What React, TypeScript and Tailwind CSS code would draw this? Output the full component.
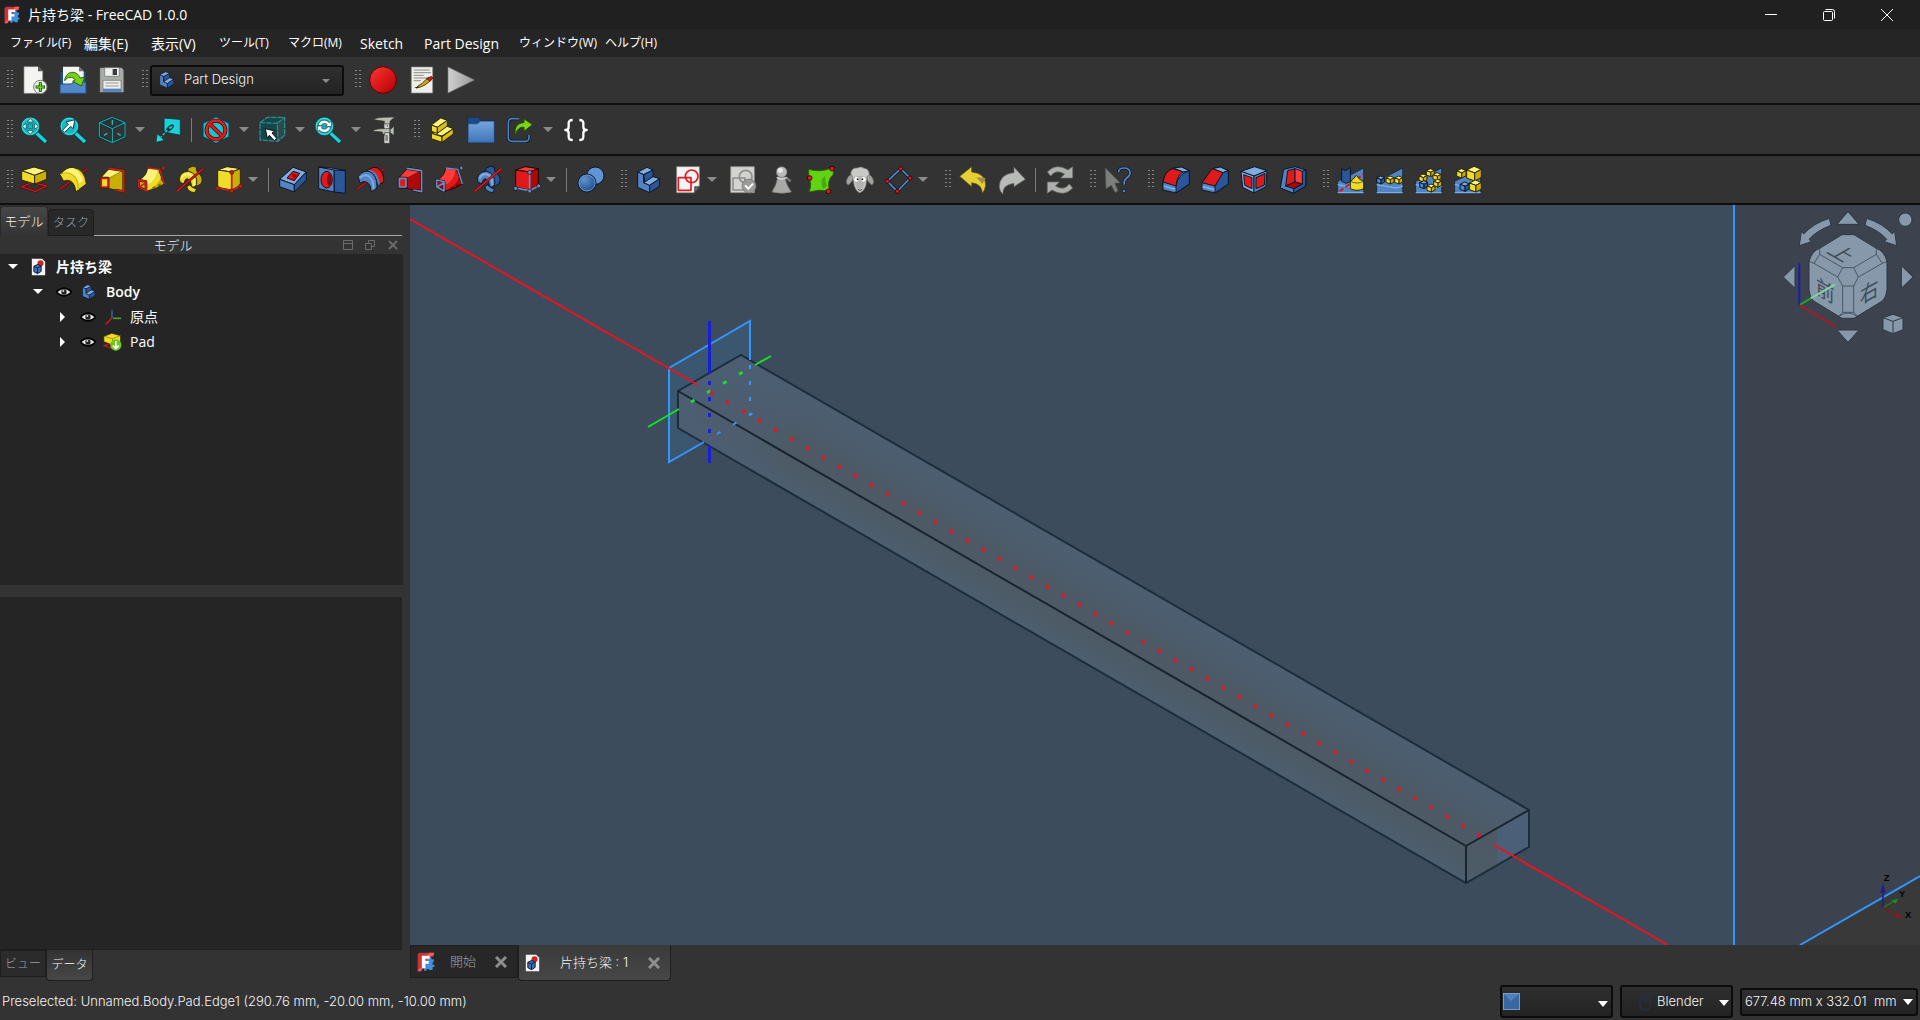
import React from 'react'

const UI_FONT = "font-['Open_Sans','Noto_Sans_CJK_JP',sans-serif]"
const GOTHIC_FONT = "font-['Inter','Noto_Sans_CJK_JP',sans-serif] font-light"

const MENUS = [
  { label: 'ファイル(F)', width: 'w-[74px] text-[12px]' },
  { label: '編集(E)', width: 'w-[67px] text-[14px]' },
  { label: '表示(V)', width: 'w-[68px] text-[14px]' },
  { label: 'ツール(T)', width: 'w-[69px] text-[12px]' },
  { label: 'マクロ(M)', width: 'w-[72px] text-[12px]' },
  { label: 'Sketch', width: 'w-[64px] text-[14px]' },
  { label: 'Part Design', width: 'w-[95px] text-[14px]' },
  { label: 'ウィンドウ(W)', width: 'w-[86px] text-[12px]' },
  { label: 'ヘルプ(H)', width: 'w-[72px] text-[12px]' },
]

interface Palette {
  light: string
  mid: string
  dark: string
  line: string
  accent: string
}

const ADD: Palette = { light: '#fdf27a', mid: '#f0dc28', dark: '#c9ae08', line: '#2c2600', accent: '#d11a1f' }
const SUB: Palette = { light: '#ff3b3b', mid: '#e01a1a', dark: '#b00808', line: '#200404', accent: '#5d92cc' }
const BLUE: Palette = { light: '#80acdf', mid: '#5284c4', dark: '#2b579a', line: '#0b1727', accent: '#d11a1f' }

function Svg({ children, className }: { children: React.ReactNode; className?: string }) {
  return (
    <svg viewBox="0 0 84 84" aria-hidden="true" className={className ?? 'size-7'} strokeLinejoin="round">
      {children}
    </svg>
  )
}

/* ---------- File / macro icons ---------- */

function NewIcon() {
  return (
    <Svg>
      <path d="M12 2h42l14 14v66H12z" fill="#f4f4f2" stroke="#8d8f8b" strokeWidth="2" />
      <path d="M54 2v14h14z" fill="#55595d" />
      <circle cx="61" cy="63" r="20" fill="#eef4ea" stroke="#777" strokeWidth="3" />
      <path d="M61 49v28M47 63h28" stroke="#173d03" strokeWidth="9" />
      <path d="M61 51v24M49 63h24" stroke="#6ddb1d" strokeWidth="4" />
    </Svg>
  )
}

function OpenIcon() {
  return (
    <Svg>
      <path d="M4 18h76v64H4z" fill="#204a87" />
      <path d="M12 2h48l14 14v42H12z" fill="#f4f4f2" />
      <path d="M60 2v14h14z" fill="#6b7075" />
      <path d="M3 54h34l6-6h38v34H3z" fill="#5288c7" stroke="#204a87" strokeWidth="3" />
      <path d="M17 44c4-32 38-32 46-8l14-2-10 26-26-14 8-4c-8-12-24-10-32 2z" fill="#73d216" stroke="#2c6402" strokeWidth="3" />
    </Svg>
  )
}

function SaveIcon() {
  return (
    <Svg>
      <path d="M5 4h66l7 8v68H5z" fill="#a9aca7" stroke="#3c3e3b" strokeWidth="3" />
      <path d="M20 5h44v26H20z" fill="#f0f0ee" stroke="#6a6c68" strokeWidth="2" />
      <path d="M44 9h13v18H44z" fill="#3a3d40" />
      <path d="M15 43h54v34H15z" fill="#eeeeec" stroke="#6a6c68" strokeWidth="2" />
      <path d="M15 68h54v9H15z" fill="#4f84c4" />
      <path d="M22 51h40M22 60h40" stroke="#9a9c98" strokeWidth="3" />
    </Svg>
  )
}

function RecordIcon() {
  return (
    <Svg>
      <circle cx="42" cy="42" r="40" fill="url(#recordFill)" stroke="#5c0404" strokeWidth="3" />
      <defs>
        <linearGradient id="recordFill" x1="0" y1="0" x2="1" y2="1">
          <stop offset="0" stopColor="#ff3434" />
          <stop offset="1" stopColor="#b40000" />
        </linearGradient>
      </defs>
    </Svg>
  )
}

function MacroIcon() {
  return (
    <Svg>
      <path d="M10 3h64v78H10z" fill="#eeeeea" stroke="#888a85" strokeWidth="2" />
      <path d="M17 12h48M17 20h52M17 28h30M17 36h42M17 44h22" stroke="#8c8e8a" strokeWidth="3" />
      <path d="M24 66c10-12 16-10 20-16l18-16 8 8-18 14c-8 4-14 8-28 10z" fill="#d4a514" stroke="#4c3800" strokeWidth="3" />
      <path d="M56 38l14-7 5 5-9 10z" fill="#cc1c1c" stroke="#500" strokeWidth="2" />
      <path d="M18 66h10l4-6z" fill="#222" />
    </Svg>
  )
}

function PlayIcon() {
  return (
    <Svg>
      <path d="M3 3L82 42L3 81z" fill="url(#playFill)" stroke="#777" strokeWidth="2" />
      <defs>
        <linearGradient id="playFill" x1="0" y1="0" x2="1" y2="0">
          <stop offset="0" stopColor="#d0d0d0" />
          <stop offset="1" stopColor="#9a9a9a" />
        </linearGradient>
      </defs>
    </Svg>
  )
}

/* ---------- View icons ---------- */

function Lens({ children }: { children: React.ReactNode }) {
  return (
    <Svg>
      <path d="M50 52L80 80" stroke="#063c41" strokeWidth="15" />
      <path d="M50 52L78 78" stroke="#1fd0d8" strokeWidth="10" />
      <circle cx="31" cy="31" r="28" fill="#17b8c0" stroke="#063c41" strokeWidth="2" />
      <circle cx="31" cy="31" r="24" fill="none" stroke="#45e2e8" strokeWidth="3" />
      {children}
    </Svg>
  )
}

function FitAllIcon() {
  return (
    <Lens>
      <g fill="#fff" stroke="#063c41" strokeWidth="2">
        <path d="M31 7l9 11H22zM31 55l9-11H22zM7 31l11-9v18zM55 31l-11-9v18z" />
      </g>
      <path d="M24 24h14v14H24z" fill="none" stroke="#0a5a60" strokeWidth="2" />
    </Lens>
  )
}

function FitSelectionIcon() {
  return (
    <Lens>
      <path d="M10 43l18-18-7-7 27-7-6 27-7-7-18 18z" fill="#fff" stroke="#063c41" strokeWidth="3" />
    </Lens>
  )
}

function SyncViewIcon() {
  return (
    <Lens>
      <path d="M12 28c4-18 24-20 34-8l6-5v17H34l6-6c-6-6-16-4-20 4z" fill="#fff" stroke="#063c41" strokeWidth="2" />
      <path d="M50 34c-4 18-24 20-34 8l-6 5V30h18l-6 6c6 6 16 4 20-4z" fill="#fff" stroke="#063c41" strokeWidth="2" />
    </Lens>
  )
}

function IsoIcon() {
  return (
    <Svg>
      <path d="M43 4L81 20V62L43 80L4 62V20zM4 20L43 38L81 20M43 38V80" fill="none" stroke="#062f33" strokeWidth="7" />
      <path d="M43 4L81 20V62L43 80L4 62V20zM4 20L43 38L81 20M43 38V80" fill="none" stroke="#1fb9c1" strokeWidth="3" />
      <path d="M43 12v14M18 58l10-6M68 58l-10-6" stroke="#1fb9c1" strokeWidth="4" />
    </Svg>
  )
}

function AlignIcon() {
  return (
    <Svg>
      <path d="M30 6L79 10V58L30 48z" fill="#1cd0d8" stroke="#063c41" strokeWidth="3" />
      <ellipse cx="48" cy="36" rx="12" ry="5" transform="rotate(-40 48 36)" fill="none" stroke="#04393d" strokeWidth="4" />
      <path d="M46 37L20 64" stroke="#04393d" strokeWidth="7" />
      <path d="M40 43L18 66" stroke="#2ad8e0" strokeWidth="4" strokeDasharray="8 4" />
      <path d="M6 79l4-26 20 20z" fill="#2ad8e0" stroke="#04393d" strokeWidth="2" />
    </Svg>
  )
}

function DrawStyleIcon() {
  return (
    <Svg>
      <path d="M42 2L81 22V62L42 82L3 62V22z" fill="#19c4cc" stroke="#063c41" strokeWidth="3" />
      <circle cx="42" cy="42" r="28" fill="none" stroke="#3f0303" strokeWidth="12" />
      <path d="M22 22l40 40" stroke="#3f0303" strokeWidth="12" />
      <circle cx="42" cy="42" r="28" fill="none" stroke="#e01b1b" strokeWidth="8" />
      <path d="M22 22l40 40" stroke="#e01b1b" strokeWidth="8" />
    </Svg>
  )
}

function BoxSelectIcon() {
  return (
    <Svg>
      <path d="M6 20L28 4H80V58L60 76L6 72z" fill="#154649" />
      <path d="M58 22L80 4V58L60 76z" fill="#2c4a4c" />
      <path d="M6 20L28 4H80V58L60 76L6 72zM6 20L58 22L60 76M58 22L80 4" fill="none" stroke="#2b8c91" strokeWidth="4" strokeDasharray="16 3" />
      <path d="M22 38l28 7-8 6 14 16-7 7-15-16-6 9z" fill="#fff" stroke="#111" strokeWidth="3" />
    </Svg>
  )
}

function CaliperIcon() {
  return (
    <Svg>
      <path d="M42 4h17v78H42z" fill="#d5d8d0" stroke="#33352f" strokeWidth="2" />
      <path d="M10 10C22 4 36 4 74 3L60 16v8H44v-8c-12-2-22-2-34-6zM8 44c12-6 20-6 34-6h22l8-8v28L60 50H44v8c-4-4-6-6-8-10-10-2-20 0-28-4z" fill="#b9bdb4" stroke="#33352f" strokeWidth="2" />
      <path d="M52 28v4M46 60h8M46 66h8M46 72h8M60 34v18" stroke="#33352f" strokeWidth="3" />
    </Svg>
  )
}

function PartIcon() {
  return (
    <Svg>
      <g stroke="#2c2600" strokeWidth="3">
        <path d="M10 52L50 28L76 38L42 60z" fill="#fdf27a" />
        <path d="M10 52L42 62V79L10 68z" fill="#f0dc28" />
        <path d="M42 62L76 38V54L42 79z" fill="#d8be10" />
        <path d="M10 27L38 6L58 13L28 34z" fill="#fdf27a" />
        <path d="M10 27L28 34V52L10 46z" fill="#f0dc28" />
        <path d="M28 34L58 13V30L28 52z" fill="#d8be10" />
      </g>
    </Svg>
  )
}

function GroupIcon() {
  return (
    <Svg>
      <path d="M2 80V8q0-4 4-4h26q4 0 6 6l2 4h42v66z" fill="#204a87" stroke="#10294c" strokeWidth="2" />
      <path d="M4 24h28l8-8h41v63H4z" fill="url(#folderFill)" stroke="#3465a4" strokeWidth="2" />
      <defs>
        <linearGradient id="folderFill" x1="0" y1="0" x2="0" y2="1">
          <stop offset="0" stopColor="#77a5da" />
          <stop offset="1" stopColor="#3f75b8" />
        </linearGradient>
      </defs>
    </Svg>
  )
}

function LinkIcon() {
  return (
    <Svg>
      <path d="M40 8H18Q7 8 7 20V64Q7 76 18 76H58Q69 76 69 64V56" fill="none" stroke="#0b1727" strokeWidth="9" />
      <path d="M40 8H18Q7 8 7 20V64Q7 76 18 76H58Q69 76 69 64V56" fill="none" stroke="#4a7fc0" strokeWidth="5" />
      <path d="M28 58C24 32 36 20 54 20V8L79 26L54 46V34C40 32 32 42 28 58z" fill="#7bd31c" stroke="#234d02" strokeWidth="3" />
    </Svg>
  )
}

function VariableIcon() {
  return (
    <Svg>
      <path d="M32 12Q20 12 20 22V32Q20 42 10 42Q20 42 20 52V62Q20 72 32 72M52 12Q64 12 64 22V32Q64 42 74 42Q64 42 64 52V62Q64 72 52 72" fill="none" stroke="#fff" strokeWidth="7" />
    </Svg>
  )
}

/* ---------- Feature icons, shared by the additive and subtractive sets ---------- */

function PadIcon() {
  return (
    <Svg>
      <path d="M4 62L38 50L80 60L46 76z" fill="none" stroke="#4a0405" strokeWidth="7" />
      <path d="M4 62L38 50L80 60L46 76z" fill="none" stroke="#d11a1f" strokeWidth="4" />
      <g stroke={ADD.line} strokeWidth="3">
        <path d="M5 14L42 3L80 14L44 28z" fill={ADD.light} />
        <path d="M5 14L44 28V54L5 42z" fill={ADD.mid} />
        <path d="M44 28L80 14V40L44 54z" fill={ADD.dark} />
      </g>
    </Svg>
  )
}

function PocketIcon() {
  return (
    <Svg>
      <g stroke={BLUE.line} strokeWidth="3">
        <path d="M2 40L42 4L82 18L46 56z" fill={BLUE.light} />
        <path d="M2 40L46 56V78L2 62z" fill={BLUE.mid} />
        <path d="M46 56L82 18V42L46 78z" fill={BLUE.dark} />
      </g>
      <path d="M24 36L42 16L62 22L46 44z" fill="#e01a1a" stroke="#200404" strokeWidth="3" />
      <path d="M38 22l16 6-10 12z" fill="#8e0606" />
    </Svg>
  )
}

function RevolutionIcon() {
  return (
    <Svg>
      <path d="M2 70L84 8" stroke="#4a0405" strokeWidth="7" />
      <path d="M2 70L84 8" stroke="#d11a1f" strokeWidth="4" />
      <path d="M3 26Q22 2 42 4Q78 10 82 54L50 78Q48 52 34 45Q22 40 14 46z" fill={ADD.mid} stroke={ADD.line} strokeWidth="3" />
      <path d="M6 26Q24 6 40 7Q66 14 72 44L60 52Q54 24 28 22Q14 22 6 26z" fill={ADD.light} />
      <path d="M3 26Q22 16 36 24Q58 34 58 72" fill="none" stroke={ADD.dark} strokeWidth="3" />
    </Svg>
  )
}

function HoleIcon() {
  return (
    <Svg>
      <g stroke={BLUE.line} strokeWidth="3">
        <path d="M48 10L82 14V82L48 78z" fill={BLUE.dark} />
        <path d="M2 3L48 10V78L2 68z" fill={BLUE.mid} />
        <path d="M2 3L40 6L82 13L48 12z" fill={BLUE.light} />
      </g>
      <ellipse cx="26" cy="41" rx="17" ry="25" fill="#e01a1a" stroke="#0b1727" strokeWidth="3" />
      <path d="M33 20q-12 20 0 42q8-6 8-21t-8-21z" fill="#8e0606" />
    </Svg>
  )
}

function GrooveIcon() {
  return (
    <Svg>
      <path d="M2 68L82 8" stroke="#4a0405" strokeWidth="7" />
      <path d="M2 68L82 8" stroke="#d11a1f" strokeWidth="4" />
      <path d="M30 14Q48 0 62 6Q82 20 80 48L66 56L40 40z" fill={SUB.mid} stroke={SUB.line} strokeWidth="3" />
      <path d="M34 14Q60 16 66 56" fill="none" stroke={BLUE.mid} strokeWidth="6" />
      <path d="M3 32Q18 12 36 16Q62 26 60 66L42 78Q42 54 28 48Q16 44 10 52z" fill={BLUE.mid} stroke={BLUE.line} strokeWidth="3" />
      <path d="M8 36Q22 24 34 30Q50 40 50 70" fill="none" stroke={BLUE.light} strokeWidth="6" />
    </Svg>
  )
}

function LoftIcon({ c }: { c: Palette }) {
  return (
    <Svg>
      <path d="M10 34L34 8L76 14V76L30 66L10 62z" fill={c.mid} stroke={c.line} strokeWidth="3" />
      <path d="M10 34L34 8L76 14L34 36z" fill={c.light} stroke={c.line} strokeWidth="2" />
      <path d="M34 36L76 14V76L34 66z" fill={c.dark} />
      <path d="M32 7L77 14V77L52 72" fill="none" stroke={c.line} strokeWidth="8" />
      <path d="M32 7L77 14V77L52 72" fill="none" stroke={c.accent} strokeWidth="5" />
      <path d="M10 37H30V63H10z" fill={c.mid} stroke={c.line} strokeWidth="9" />
      <path d="M10 37H30V63H10z" fill={c.mid} stroke={c.accent} strokeWidth="5" />
    </Svg>
  )
}

function PipeIcon({ c }: { c: Palette }) {
  return (
    <Svg>
      <path d="M8 42Q30 30 32 6L66 10Q70 38 82 54Q58 70 28 76L6 62z" fill={c.dark} stroke={c.line} strokeWidth="3" />
      <path d="M8 42Q30 30 33 8L62 11Q60 44 30 58z" fill={c.light} />
      <path d="M62 11Q60 44 30 58V74Q64 60 72 34z" fill={c.mid} />
      <path d="M46 66Q64 60 78 50" fill="none" stroke={c.line} strokeWidth="5" strokeDasharray="9 9" strokeOpacity="0.5" />
      <path d="M32 6L68 10L82 54" fill="none" stroke={c.accent} strokeWidth="4" />
      <path d="M5 42L27 47V75L5 62z" fill="none" stroke={c.line} strokeWidth="8" />
      <path d="M5 42L27 47V75L5 62zM27 50L8 62" fill="none" stroke={c.accent} strokeWidth="5" />
      <ellipse cx="79" cy="6" rx="5" ry="6" fill={c.accent} stroke={c.line} strokeWidth="2" />
    </Svg>
  )
}

function HelixIcon({ c, rod }: { c: Palette; rod: string }) {
  return (
    <Svg>
      <path d="M36 6Q52 -4 62 4Q58 12 66 20Q84 34 76 52Q66 64 54 58Q62 46 50 34Q32 24 36 6z" fill={c.dark} stroke={c.line} strokeWidth="3" />
      <path d="M10 40Q12 16 38 16Q66 22 62 56Q54 68 46 62Q46 40 32 38Q27 40 24 52Q12 54 10 40z" fill={c.mid} stroke={c.line} strokeWidth="3" />
      <path d="M17 38Q21 24 38 24Q56 32 55 58" fill="none" stroke={c.light} strokeWidth="6" />
      <path d="M32 62Q36 78 56 80L62 68Q46 66 42 56z" fill={c.mid} stroke={c.line} strokeWidth="3" />
      <path d="M2 76L82 8" stroke="#3f0303" strokeWidth="7" />
      <path d="M2 76L82 8" stroke={rod} strokeWidth="5" />
    </Svg>
  )
}

function PrimitiveIcon({ c }: { c: Palette }) {
  return (
    <Svg>
      <g stroke={c.line} strokeWidth="3">
        <path d="M8 12L36 2L76 8L50 18z" fill={c.light} />
        <path d="M8 12L50 18V72L8 64z" fill={c.mid} />
        <path d="M50 18L76 8V58L50 72z" fill={c.dark} />
      </g>
      <path d="M8 66L50 74L76 60M50 18V74" fill="none" stroke={c.accent} strokeWidth="5" />
      <g fill={c.accent} stroke={c.line} strokeWidth="2">
        <circle cx="8" cy="67" r="6" />
        <circle cx="50" cy="75" r="6" />
        <circle cx="77" cy="60" r="6" />
        <circle cx="50" cy="19" r="6" />
      </g>
    </Svg>
  )
}

function BooleanIcon() {
  return (
    <Svg>
      <circle cx="55" cy="29" r="26" fill="#5f95d2" stroke="#0b1727" strokeWidth="3" />
      <circle cx="30" cy="51" r="27" fill="url(#ballFill)" stroke="#0b1727" strokeWidth="3" />
      <circle cx="30" cy="51" r="24" fill="none" stroke="#5f95d2" strokeWidth="3" />
      <defs>
        <radialGradient id="ballFill" cx="0.35" cy="0.3" r="0.8">
          <stop offset="0" stopColor="#5f95d2" />
          <stop offset="1" stopColor="#1a4684" />
        </radialGradient>
      </defs>
    </Svg>
  )
}

/* ---------- Body / sketch icons ---------- */

function BodyIcon({ className }: { className?: string }) {
  return (
    <Svg className={className}>
      <g stroke={BLUE.line} strokeWidth="3">
        <path d="M8 18L36 4L54 12L26 26z" fill={BLUE.light} />
        <path d="M8 18L26 26V50L44 58V80L8 64z" fill={BLUE.mid} />
        <path d="M26 26L54 12V32L30 50z" fill={BLUE.dark} />
        <path d="M26 50L54 32L74 38L44 58z" fill={BLUE.light} />
        <path d="M44 58L74 38V60L44 80z" fill={BLUE.dark} />
      </g>
    </Svg>
  )
}

function SketchIcon() {
  return (
    <Svg>
      <path d="M8 2H76V62L62 80H8z" fill="#f4f4f2" stroke="#8d8f8b" strokeWidth="2" />
      <path d="M76 62H62V80z" fill="#6a6e66" stroke="#222" strokeWidth="2" />
      <path d="M13 35H51V73H13z" fill="none" stroke="#e01b24" strokeWidth="5" />
      <circle cx="53" cy="31" r="19" fill="none" stroke="#e01b24" strokeWidth="5" />
    </Svg>
  )
}

function ValidateIcon() {
  return (
    <Svg>
      <path d="M5 2H76V80H5z" fill="#d3d3d1" stroke="#8d8f8b" strokeWidth="2" />
      <path d="M12 36H48V72H12z" fill="none" stroke="#8f8f8d" strokeWidth="5" />
      <circle cx="50" cy="32" r="19" fill="none" stroke="#8f8f8d" strokeWidth="5" />
      <circle cx="60" cy="60" r="21" fill="#9b9b99" stroke="#6a6a68" strokeWidth="2" />
      <path d="M48 58l10 10 14-15" fill="none" stroke="#fff" strokeWidth="6" />
    </Svg>
  )
}

function PawnIcon() {
  return (
    <Svg>
      <path d="M54 34l14 12" stroke="#777" strokeWidth="7" />
      <path d="M12 78Q26 56 30 32H50Q54 56 70 78Q42 86 12 78z" fill="#a8a8a6" stroke="#777" strokeWidth="2" />
      <circle cx="41" cy="18" r="16" fill="#bababa" stroke="#777" strokeWidth="2" />
      <circle cx="37" cy="13" r="8" fill="#e6e6e6" />
      <path d="M26 34Q42 44 56 34" fill="none" stroke="#d8d8d8" strokeWidth="4" />
    </Svg>
  )
}

function BlobIcon() {
  return (
    <Svg>
      <path d="M5 10Q40 20 74 6Q84 14 78 26Q58 44 68 76Q40 68 6 78Q16 56 5 34z" fill="#62d312" stroke="#2a6102" strokeWidth="3" />
      <path d="M54 30Q36 44 48 68Q58 66 60 58Q54 44 54 30z" fill="#3d9a08" fillOpacity="0.7" />
      <g fill="#e01b1b" stroke="#3f0303" strokeWidth="3">
        <circle cx="75" cy="8" r="7" />
        <circle cx="8" cy="36" r="7" />
        <circle cx="64" cy="76" r="7" />
      </g>
    </Svg>
  )
}

function SheepIcon() {
  return (
    <Svg>
      <path d="M18 24Q4 30 1 46Q2 58 8 56Q18 48 22 38zM66 24Q80 30 83 46Q82 58 76 56Q66 48 62 38z" fill="#a3a3a1" stroke="#6f6f6d" strokeWidth="2" />
      <path d="M14 22Q18 4 34 6Q46 0 54 7Q68 8 70 24Q62 30 62 42Q60 74 42 80Q26 76 22 44Q22 30 14 22z" fill="#c9c9c7" stroke="#7d7d7b" strokeWidth="2" />
      <path d="M24 34Q42 24 60 34L50 70Q42 76 34 70z" fill="#b4b4b2" />
      <circle cx="32" cy="40" r="7" fill="#fff" />
      <circle cx="52" cy="40" r="7" fill="#fff" />
      <circle cx="35" cy="40" r="3" fill="#222" />
      <circle cx="49" cy="40" r="3" fill="#222" />
      <path d="M36 70l6 4 6-4" fill="none" stroke="#555" strokeWidth="3" />
    </Svg>
  )
}

function DatumIcon() {
  return (
    <Svg>
      <path d="M7 46L47 8L75 36L37 76z" fill="none" stroke="#0b1727" strokeWidth="9" />
      <path d="M7 46L47 8L75 36L37 76z" fill="none" stroke="#5488c6" strokeWidth="5" />
      <g fill="#e01b1b" stroke="#3f0303" strokeWidth="3">
        <circle cx="47" cy="8" r="6" />
        <circle cx="7" cy="46" r="6" />
        <circle cx="75" cy="36" r="6" />
        <circle cx="37" cy="76" r="6" />
      </g>
    </Svg>
  )
}

/* ---------- Edit icons ---------- */

function UndoIcon() {
  return (
    <Svg>
      <path d="M2 31L38 2V18Q80 22 80 58Q78 72 70 82Q70 54 38 50V62z" fill="#e8cf38" stroke="#5a4d04" strokeWidth="2" />
      <path d="M52 34L80 36L70 54z" fill="#9d8f4a" />
    </Svg>
  )
}

function RedoIcon() {
  return (
    <Svg>
      <path d="M82 40L48 4V20Q4 24 4 64Q6 78 14 84Q14 56 48 52V62z" fill="#b9bbb8" stroke="#6a6c69" strokeWidth="2" />
    </Svg>
  )
}

function RefreshIcon() {
  return (
    <Svg>
      <g fill="#adafac" stroke="#6d6f6c" strokeWidth="2">
        <path d="M4 18Q30 -10 66 12L80 2V36H44L56 24Q30 8 14 30z" />
        <path d="M80 66Q54 94 18 72L4 82V48H40L28 60Q54 76 70 54z" />
      </g>
    </Svg>
  )
}

function WhatsThisIcon() {
  return (
    <Svg>
      <path d="M4 6L48 50L32 52L42 74L34 80L22 58L6 68z" fill="#7d7f7c" stroke="#55574f" strokeWidth="2" />
      <path d="M44 18Q44 6 60 6Q78 6 78 20Q78 30 68 36Q60 42 60 56" fill="none" stroke="#0b1727" strokeWidth="9" />
      <path d="M44 18Q44 6 60 6Q78 6 78 20Q78 30 68 36Q60 42 60 56" fill="none" stroke="#5086c6" strokeWidth="5" />
      <circle cx="60" cy="75" r="5" fill="#5086c6" stroke="#0b1727" strokeWidth="2" />
    </Svg>
  )
}

/* ---------- Dress-up icons ---------- */

function FilletIcon() {
  return (
    <Svg>
      <g stroke={BLUE.line} strokeWidth="3">
        <path d="M3 44Q10 14 34 6L58 3L82 14V54L42 81L3 72z" fill={BLUE.mid} />
        <path d="M34 6L58 3L82 14L64 18z" fill={BLUE.light} />
        <path d="M42 60Q46 26 82 14V54L42 81z" fill={BLUE.dark} />
        <path d="M3 48Q8 16 32 8L64 18Q46 24 42 60z" fill={SUB.mid} />
        <path d="M5 60L40 70" stroke={BLUE.light} strokeWidth="5" />
      </g>
    </Svg>
  )
}

function ChamferIcon() {
  return (
    <Svg>
      <g stroke={BLUE.line} strokeWidth="3">
        <path d="M3 50L34 8L58 3L82 14V54L42 81L3 72z" fill={BLUE.mid} />
        <path d="M34 8L58 3L82 14L66 20z" fill={BLUE.light} />
        <path d="M42 60L66 20L82 14V54L42 81z" fill={BLUE.dark} />
        <path d="M3 50L34 8L66 20L42 60z" fill={SUB.mid} />
        <path d="M5 62L40 71" stroke={BLUE.light} strokeWidth="5" />
      </g>
    </Svg>
  )
}

function DraftIcon() {
  return (
    <Svg>
      <g stroke={BLUE.line} strokeWidth="3">
        <path d="M3 16L44 2L81 14L42 30z" fill={BLUE.light} />
        <path d="M3 16L42 30V81L8 64z" fill={BLUE.light} />
        <path d="M42 30L81 14L78 62L42 81z" fill={BLUE.mid} />
        <path d="M11 26L36 35V68L14 58z" fill={SUB.mid} />
        <path d="M48 35L75 23L73 57L48 68z" fill={SUB.mid} />
      </g>
    </Svg>
  )
}

function ThicknessIcon() {
  return (
    <Svg>
      <g stroke={BLUE.line} strokeWidth="3">
        <path d="M14 10L48 2L81 12L80 60L44 82L4 66z" fill={BLUE.mid} />
        <path d="M81 12L80 60L44 82V68L70 54L70 16z" fill={BLUE.dark} />
        <path d="M26 14L48 8V48L20 60z" fill={SUB.mid} />
        <path d="M48 8L70 16V54L48 48z" fill={SUB.light} />
        <path d="M20 60L48 48L70 54L44 68z" fill={SUB.dark} />
      </g>
    </Svg>
  )
}

/* ---------- Pattern icons ---------- */

function Cube({ x, y, s, c }: { x: number; y: number; s: number; c: Palette }) {
  const p = (pts: number[][]) => pts.map(([a, b]) => `${x + a * s},${y + b * s}`).join(' ')
  return (
    <g stroke={c.line} strokeWidth="3">
      <polygon points={p([[0, 0.25], [0.5, 0], [1, 0.2], [0.55, 0.45]])} fill={c.light} />
      <polygon points={p([[0, 0.25], [0.55, 0.45], [0.55, 1], [0, 0.8]])} fill={c.mid} />
      <polygon points={p([[0.55, 0.45], [1, 0.2], [1, 0.75], [0.55, 1]])} fill={c.dark} />
    </g>
  )
}

function PatternBase() {
  return (
    <>
      <path d="M2 46L50 22L80 6V82H2z" fill={BLUE.mid} stroke={BLUE.line} strokeWidth="2" />
      <path d="M2 56L60 66L80 60M2 80H80" fill="none" stroke={BLUE.light} strokeWidth="4" />
    </>
  )
}

function MirrorIcon() {
  return (
    <Svg>
      <PatternBase />
      <path d="M8 76L78 26" stroke="#d11a1f" strokeWidth="6" strokeDasharray="14 7" />
      <path d="M14 8L26 14L40 4V46L28 52L14 46z" fill={BLUE.dark} stroke={BLUE.line} strokeWidth="3" />
      <path d="M40 46L48 40L58 28L68 40L80 46V68Q60 78 40 68z" fill={ADD.mid} stroke={ADD.line} strokeWidth="3" />
      <path d="M40 46Q60 56 80 46" fill="none" stroke={ADD.line} strokeWidth="2" />
    </Svg>
  )
}

function LinearIcon() {
  return (
    <Svg>
      <PatternBase />
      <Cube x={2} y={30} s={24} c={BLUE} />
      <Cube x={30} y={30} s={24} c={ADD} />
      <Cube x={56} y={30} s={24} c={ADD} />
    </Svg>
  )
}

function PolarIcon() {
  return (
    <Svg>
      <PatternBase />
      <Cube x={34} y={8} s={24} c={ADD} />
      <Cube x={12} y={24} s={24} c={ADD} />
      <Cube x={54} y={20} s={24} c={ADD} />
      <Cube x={14} y={44} s={24} c={BLUE} />
      <Cube x={56} y={40} s={24} c={ADD} />
      <Cube x={36} y={54} s={24} c={ADD} />
    </Svg>
  )
}

function MultiIcon() {
  return (
    <Svg>
      <PatternBase />
      <Cube x={8} y={8} s={28} c={ADD} />
      <Cube x={38} y={1} s={44} c={ADD} />
      <Cube x={18} y={48} s={28} c={BLUE} />
      <Cube x={46} y={42} s={36} c={ADD} />
    </Svg>
  )
}

/* ---------- Logo and tree icons ---------- */

function Logo({ className }: { className: string }) {
  return (
    <svg viewBox="0 0 60 66" aria-hidden="true" className={className}>
      <path d="M8 2H52L46 20L14 64H2V8z" fill="#cb333b" />
      <path d="M40 2H58L54 14H36z" fill="#ff585d" />
      <path d="M2 64L8 54H18L12 64z" fill="#ff585d" />
      <path d="M36 18h12v6h8v10h-4v8h6v8h-6v10H40v-4h-8v6h-8V48z" fill="#418fde" />
      <path d="M16 12H42V22H28V30H39V39H28V54H16z" fill="#fff" />
    </svg>
  )
}

function DocIcon({ className }: { className: string }) {
  return (
    <svg viewBox="0 0 44 54" aria-hidden="true" className={className}>
      <path d="M2 2H33L42 11V52H2z" fill="#f4f4f2" />
      <circle cx="28" cy="16" r="9" fill="#d81e1e" />
      <path d="M8 25L20 19L30 24V40L19 47L8 41z" fill="#3f70b2" stroke="#0f2340" strokeWidth="3" />
      <path d="M8 25L19 30L30 24M19 30V46" fill="none" stroke="#0f2340" strokeWidth="3" />
    </svg>
  )
}

function EyeIcon() {
  return (
    <svg viewBox="0 0 48 30" aria-hidden="true" className="h-[10px] w-4">
      <path d="M1 15Q24 -8 47 15Q24 38 1 15z" fill="#e8e8e6" stroke="#000" strokeWidth="5" />
      <circle cx="24" cy="15" r="8" fill="#222" />
      <circle cx="22" cy="12" r="3" fill="#ddd" />
    </svg>
  )
}

function OriginIcon() {
  return (
    <svg viewBox="0 0 48 48" aria-hidden="true" className="size-4">
      <path d="M21 2V28" stroke="#3a6db3" strokeWidth="4" />
      <path d="M24 28H48" stroke="#56a11a" strokeWidth="5" />
      <path d="M20 28L2 46" stroke="#c01818" strokeWidth="5" />
    </svg>
  )
}

function PadTreeIcon() {
  return (
    <svg viewBox="0 0 56 54" aria-hidden="true" className="h-[18px] w-[19px]">
      <path d="M2 38L24 30L48 38L26 46z" fill="none" stroke="#c01818" strokeWidth="4" />
      <path d="M2 10L26 1L52 8V24L28 36L2 26z" fill="#f0dc28" stroke="#2c2600" strokeWidth="2" />
      <path d="M2 10L28 17L52 8M28 17V36" fill="none" stroke="#8c7800" strokeWidth="2" />
      <circle cx="38" cy="36" r="17" fill="#6cc81c" />
      <path d="M38 24V46M29 38l9 9 9-9" fill="none" stroke="#fff" strokeWidth="5" />
    </svg>
  )
}

/* ---------- Toolbars ---------- */

function Grip() {
  return (
    <span className="flex w-[19px] shrink-0 justify-end pr-[2px] first:w-[14px] first:pr-[1px]">
      <svg viewBox="0 0 6 20" aria-hidden="true" className="h-5 w-[6px]">
        <path d="M1 0V20M5 0V20" stroke="#858585" strokeWidth="2" strokeDasharray="1 3" />
      </svg>
    </span>
  )
}

function Separator() {
  return (
    <span className="flex w-[9px] shrink-0 justify-center">
      <span className="h-6 w-px bg-[#7c7c7c]" />
    </span>
  )
}

function Tool({ label, children }: { label: string; children: React.ReactNode }) {
  return (
    <button type="button" aria-label={label} className="flex h-9 w-[39px] shrink-0 items-center justify-center">
      {children}
    </button>
  )
}

function Drop({ label, wide }: { label: string; wide?: boolean }) {
  return (
    <button
      type="button"
      aria-label={label}
      className={`flex h-9 shrink-0 items-center ${wide ? 'w-[17px] justify-center' : 'w-4 justify-start'}`}
    >
      <svg viewBox="0 0 10 5" aria-hidden="true" className="h-[5px] w-[10px]">
        <path d="M0 0H10L5 5z" fill="#8b8b8b" />
      </svg>
    </button>
  )
}

function ToolRow({ label, height, children }: { label: string; height: string; children: React.ReactNode }) {
  return (
    <div role="toolbar" aria-label={label} className={`flex shrink-0 items-center border-b-2 border-[#0e0e0e] bg-[#333333] ${height}`}>
      {children}
    </div>
  )
}

function Toolbars() {
  return (
    <div className="shrink-0">
      <ToolRow label="ファイル" height="h-12">
        <Grip />
        <Tool label="新規"><NewIcon /></Tool>
        <Tool label="開く"><OpenIcon /></Tool>
        <Tool label="保存"><SaveIcon /></Tool>
        <Grip />
        <div className="relative h-[31px] w-[194px]">
          <select
            aria-label="ワークベンチ"
            className={`h-full w-full appearance-none rounded-[3px] border-2 border-[#0c0c0c] bg-linear-to-b from-[#2f2f2f] to-[#232323] pl-8 text-[13px] text-gray-100 ${GOTHIC_FONT}`}
          >
            <option>Part Design</option>
          </select>
          <BodyIcon className="pointer-events-none absolute top-[6px] left-2 size-[18px]" />
          <svg viewBox="0 0 8 4" aria-hidden="true" className="pointer-events-none absolute top-[14px] right-[14px] h-1 w-2">
            <path d="M0 0H8L4 4z" fill="#8b8b8b" />
          </svg>
        </div>
        <Grip />
        <Tool label="マクロの記録"><RecordIcon /></Tool>
        <Tool label="マクロ"><MacroIcon /></Tool>
        <Tool label="マクロの実行"><PlayIcon /></Tool>
      </ToolRow>

      <ToolRow label="表示" height="h-[51px]">
        <Grip />
        <Tool label="全てにフィット"><FitAllIcon /></Tool>
        <Tool label="選択にフィット"><FitSelectionIcon /></Tool>
        <Tool label="アイソメトリック"><IsoIcon /></Tool>
        <Drop label="標準ビュー" wide />
        <Tool label="選択に整列"><AlignIcon /></Tool>
        <Separator />
        <Tool label="描画スタイル"><DrawStyleIcon /></Tool>
        <Drop label="描画スタイルのメニュー" wide />
        <Tool label="ボックス選択"><BoxSelectIcon /></Tool>
        <Drop label="選択のメニュー" wide />
        <Tool label="ビューの同期"><SyncViewIcon /></Tool>
        <Drop label="同期のメニュー" wide />
        <Tool label="測定"><CaliperIcon /></Tool>
        <Grip />
        <Tool label="パーツ"><PartIcon /></Tool>
        <Tool label="グループ"><GroupIcon /></Tool>
        <Tool label="リンク"><LinkIcon /></Tool>
        <Drop label="リンクのメニュー" wide />
        <Tool label="変数セット"><VariableIcon /></Tool>
      </ToolRow>

      <ToolRow label="Part Design" height="h-[49px]">
        <Grip />
        <Tool label="パッド"><PadIcon /></Tool>
        <Tool label="レボリューション"><RevolutionIcon /></Tool>
        <Tool label="加算ロフト"><LoftIcon c={ADD} /></Tool>
        <Tool label="加算パイプ"><PipeIcon c={ADD} /></Tool>
        <Tool label="加算らせん"><HelixIcon c={ADD} rod="#d11a1f" /></Tool>
        <Tool label="加算プリミティブ"><PrimitiveIcon c={ADD} /></Tool>
        <Drop label="加算プリミティブのメニュー" />
        <Separator />
        <Tool label="ポケット"><PocketIcon /></Tool>
        <Tool label="ホール"><HoleIcon /></Tool>
        <Tool label="グルーブ"><GrooveIcon /></Tool>
        <Tool label="減算ロフト"><LoftIcon c={SUB} /></Tool>
        <Tool label="減算パイプ"><PipeIcon c={SUB} /></Tool>
        <Tool label="減算らせん"><HelixIcon c={BLUE} rod="#e01a1a" /></Tool>
        <Tool label="減算プリミティブ"><PrimitiveIcon c={SUB} /></Tool>
        <Drop label="減算プリミティブのメニュー" />
        <Separator />
        <Tool label="ブーリアン"><BooleanIcon /></Tool>
        <Grip />
        <Tool label="ボディー"><BodyIcon /></Tool>
        <Tool label="スケッチ"><SketchIcon /></Tool>
        <Drop label="スケッチのメニュー" />
        <Tool label="スケッチの検証"><ValidateIcon /></Tool>
        <Tool label="形状の確認"><PawnIcon /></Tool>
        <Tool label="サブシェイプバインダー"><BlobIcon /></Tool>
        <Tool label="クローン"><SheepIcon /></Tool>
        <Tool label="データム"><DatumIcon /></Tool>
        <Drop label="データムのメニュー" />
        <Grip />
        <Tool label="元に戻す"><UndoIcon /></Tool>
        <Tool label="やり直す"><RedoIcon /></Tool>
        <Separator />
        <Tool label="更新"><RefreshIcon /></Tool>
        <Grip />
        <Tool label="ヘルプ"><WhatsThisIcon /></Tool>
        <Grip />
        <Tool label="フィレット"><FilletIcon /></Tool>
        <Tool label="面取り"><ChamferIcon /></Tool>
        <Tool label="抜き勾配"><DraftIcon /></Tool>
        <Tool label="厚み"><ThicknessIcon /></Tool>
        <Grip />
        <Tool label="鏡像"><MirrorIcon /></Tool>
        <Tool label="直線状パターン"><LinearIcon /></Tool>
        <Tool label="円状パターン"><PolarIcon /></Tool>
        <Tool label="マルチ変換"><MultiIcon /></Tool>
      </ToolRow>
    </div>
  )
}

/* ---------- Left dock ---------- */

interface TreeItem {
  name: string
  indent: string
  open: boolean
  eye: boolean
  icon: React.ReactNode
  bold?: boolean
}

const TREE: TreeItem[] = [
  { name: '片持ち梁', indent: 'pl-[6px]', open: true, eye: false, icon: <DocIcon className="h-[18px] w-[15px]" />, bold: true },
  { name: 'Body', indent: 'pl-[31px]', open: true, eye: true, icon: <BodyIcon className="size-4" />, bold: true },
  { name: '原点', indent: 'pl-[55px]', open: false, eye: true, icon: <OriginIcon /> },
  { name: 'Pad', indent: 'pl-[55px]', open: false, eye: true, icon: <PadTreeIcon /> },
]

function TreeRow({ item }: { item: TreeItem }) {
  return (
    <li className={`flex h-[25px] items-center ${item.indent}`}>
      <button type="button" aria-label={`${item.name}を${item.open ? '閉じる' : '開く'}`} className="flex w-[14px] justify-center">
        <svg viewBox="0 0 12 12" aria-hidden="true" className="size-3">
          <path d={item.open ? 'M1 3H11L6 8z' : 'M4 1L9 6L4 11z'} fill="#fff" />
        </svg>
      </button>
      {item.eye && <span className="ml-[10px] flex w-[18px] justify-center"><EyeIcon /></span>}
      <span className={`flex w-[19px] justify-center ${item.eye ? 'ml-[6px]' : 'ml-[9px]'}`}>{item.icon}</span>
      <span className={`ml-2 text-[14px] text-white ${item.bold ? 'font-semibold' : ''}`}>{item.name}</span>
    </li>
  )
}

function ModelDock() {
  return (
    <aside className={`flex w-[410px] shrink-0 flex-col bg-[#333333] ${UI_FONT}`}>
      <div className="flex h-[31px] shrink-0 items-end pr-2">
        <button type="button" className="h-[30px] w-12 rounded-t-sm border border-[#2a2a2a] border-b-0 bg-linear-to-b from-[#474747] to-[#333333] text-[13px] font-light text-gray-100">モデル</button>
        <button type="button" className="h-[27px] w-[46px] rounded-t-sm border border-[#1e1e1e] bg-[#282828] text-[12px] font-light text-gray-400">タスク</button>
        <span className="flex-1 border-b border-[#a8a8a8]" />
      </div>
      <div className="flex h-[18px] shrink-0 items-center pr-2">
        <h2 className="flex-1 pl-1 text-center text-[13px] leading-none font-light text-gray-100">モデル</h2>
        <svg viewBox="0 0 60 12" aria-hidden="true" className="h-3 w-[60px]" fill="none" stroke="#6b6b6b">
          <path d="M1.500 1.500H10.500V10.500H1.500zM1.500 4.500H10.500" />
          <path d="M23.500 4.500H29.500V10.500H23.500zM26.500 4.500V1.500H32.500V7.500H29.500" />
          <path d="M47 2L55 10M55 2L47 10" strokeWidth="2" />
        </svg>
      </div>
      <div className="mr-[7px] flex-[331] bg-[#252525]">
        <ul>
          {TREE.map((item) => (
            <TreeRow key={item.name} item={item} />
          ))}
        </ul>
      </div>
      <div className="h-3 shrink-0" />
      <div className="mr-2 flex-[353] border-b border-[#1e1e1e] bg-[#252525]" />
      <div className="flex h-[31px] shrink-0 items-start">
        <button type="button" className="h-[27px] w-[46px] border border-[#1e1e1e] bg-[#2b2b2b] text-[12px] font-light text-gray-400">ビュー</button>
        <button type="button" className="h-[31px] w-[47px] rounded-b-sm border border-[#1e1e1e] border-t-0 bg-linear-to-b from-[#333333] to-[#474747] text-[12px] font-light text-gray-100">データ</button>
      </div>
    </aside>
  )
}

/* ---------- 3D view ---------- */

function Scene() {
  return (
    <svg viewBox="410 205 1510 740" preserveAspectRatio="xMidYMid slice" role="img" aria-label="片持ち梁" className="absolute inset-0 h-full w-full">
      <defs>
        <linearGradient id="beamFill" gradientUnits="userSpaceOnUse" x1="1100" y1="562" x2="1052" y2="645">
          <stop offset="0" stopColor="#4c5e71" />
          <stop offset="0.3" stopColor="#4c5c6c" />
          <stop offset="0.45" stopColor="#4d5a65" />
          <stop offset="0.78" stopColor="#4d5b66" />
          <stop offset="1" stopColor="#4c5e71" />
        </linearGradient>
        <linearGradient id="beamEnd" gradientUnits="userSpaceOnUse" x1="678" y1="391" x2="790" y2="455">
          <stop offset="0" stopColor="#4c5e73" />
          <stop offset="0.7" stopColor="#4c5e73" stopOpacity="0.5" />
          <stop offset="1" stopColor="#4c5e73" stopOpacity="0" />
        </linearGradient>
      </defs>
      <rect x="410" y="205" width="1510" height="740" fill="#3c424e" />
      <path d="M1800 945L1920 876V945z" fill="#393939" />
      <rect x="410" y="205" width="1324" height="740" fill="#3c4c5d" />
      <path d="M669 368L750 321V415L669 462z" fill="#3b566f" />

      <path d="M678 391L741 355L1529 810V847L1466 883L678 428z" fill="url(#beamFill)" />
      <path d="M678 391L741 355L840 412L790 493L678 428z" fill="url(#beamEnd)" />
      <path d="M1497 828L1529 810V847L1497 865z" fill="#4b5f78" />
      <path d="M678 391L741 355L1529 810V847L1466 883L678 428z" fill="none" stroke="#1c2d3c" strokeWidth="2" />
      <path d="M678 391L1466 846V883M1466 846L1529 810" fill="none" stroke="#1b242d" strokeWidth="2" />

      <g fill="none" stroke="#3296ff" strokeWidth="2">
        <path d="M704 442L669 462V368L750 321V360" />
        <path d="M750 365V416" strokeDasharray="4 12" />
        <path d="M717 434L753 413" strokeDasharray="4 14.500" />
        <path d="M1734 205V945M1800 945L1920 876" />
      </g>
      <g fill="none" stroke="#181fd8" strokeWidth="3">
        <path d="M709.500 321V373M709.500 446V463" />
        <path d="M709.500 381V434" strokeDasharray="4 12" />
      </g>
      <g fill="none" stroke="#14e32c" strokeWidth="2">
        <path d="M648 427L679 409M755 365L771 356" />
        <path d="M691 402L743 372" strokeWidth="3" strokeDasharray="4 14.500" />
      </g>
      <g fill="none" stroke="#ea1420" strokeWidth="2">
        <path d="M410 219L698 385M1494 845L1668 945" />
        <path d="M710 392L1484 838" strokeWidth="3" strokeDasharray="4 14.450" />
      </g>
    </svg>
  )
}

function NavCube() {
  return (
    <svg viewBox="0 0 540 450" role="img" aria-label="ナビゲーションキューブ" className="absolute top-0 right-0 h-[150px] w-[180px]" strokeLinejoin="round">
      <g transform="translate(0 -15)" fill="#8698a9" stroke="#2c3744" strokeWidth="3">
        <path d="M324 35L357 73H291zM324 427L357 390H291zM130 231L165 197V265zM519 231L484 197V265z" />
        <path d="M268 55L273 76Q230 92 207 118L214 125L178 137L184 94L191 102Q220 70 268 55z" />
        <path d="M380 55L375 76Q418 92 440 118L433 125L470 137L464 94L457 102Q428 70 380 55z" />
        <circle cx="496" cy="59" r="20" />
        <path d="M429 353L459 343L489 353V389L459 401L429 389z" />
        <path d="M429 353L459 364L489 353M459 364V401" fill="none" />
        <path d="M306 104H342L409 145Q432 152 441 184V270Q436 300 422 306L342 355H306L226 306Q212 300 207 270V184Q216 152 239 145z" />
        <g fill="none" strokeWidth="2">
          <path d="M239 145V163L308 203H341L409 163V145M239 163L222 190L293 231L308 203M409 163L427 190L355 231L341 203" />
          <path d="M293 231L308 258H341L355 231M308 258V337H341V258M308 337L296 349M341 337L353 349M222 190L207 184M427 190L441 184" />
          <path d="M298 348Q324 330 350 348" />
        </g>
      </g>
      <g transform="translate(0 -15)" className="font-['Noto_Sans_CJK_JP',sans-serif]" fill="#3f4c5a" fontSize="64" textAnchor="middle">
        <text transform="matrix(0.87 0.5 -0.87 0.5 306 160)" x="0" y="24">上</text>
        <text transform="matrix(0.87 0.5 0 1 256 272)" x="0" y="24">前</text>
        <text transform="matrix(0.87 -0.5 0 1 388 275)" x="0" y="24">右</text>
      </g>
      <g transform="translate(0 -15)" strokeWidth="6" fill="none">
        <path d="M178 314V190" stroke="#1c1ca8" />
        <path d="M180 314L212 295" stroke="#1fa51f" />
        <path d="M212 295L286 253" stroke="#7fd3a0" />
        <path d="M180 317L286 379" stroke="#a31d22" />
      </g>
    </svg>
  )
}

function AxisCross() {
  return (
    <svg viewBox="0 0 120 150" role="img" aria-label="座標軸" className="absolute right-0 bottom-[22px] h-[50px] w-10 font-['Liberation_Sans',sans-serif]">
      <path d="M9 104V50" stroke="#1f1f8c" strokeWidth="5" />
      <path d="M9 30L17 60H1z" fill="#1f1f8c" />
      <path d="M9 104L40 86" stroke="#1f7a1f" strokeWidth="4" />
      <path d="M56 77L46 92L34 82z" fill="#1f8a1f" />
      <path d="M9 104L50 128" stroke="#7c1c1c" strokeWidth="4" />
      <path d="M72 138L42 130L50 120z" fill="#8c1c1c" />
      <g fill="#000" fontSize="28" fontWeight="bold">
        <text x="11" y="24">Z</text>
        <text x="57" y="72">Y</text>
        <text x="75" y="136">X</text>
      </g>
    </svg>
  )
}

function CloseGlyph() {
  return (
    <svg viewBox="0 0 12 12" aria-hidden="true" className="size-3" stroke="#8d8d8d" strokeWidth="3">
      <path d="M1 1L11 11M11 1L1 11" />
    </svg>
  )
}

function Workspace() {
  return (
    <main className="flex min-w-0 flex-1 flex-col">
      <div className="relative flex-1 overflow-hidden bg-[#3c4c5d]">
        <Scene />
        <NavCube />
        <AxisCross />
      </div>
      <div className={`flex h-9 shrink-0 items-start text-[13px] ${GOTHIC_FONT}`}>
        <div className="flex h-[33px] w-[108px] items-center border border-[#1e1e1e] bg-[#272727] pl-[6px] text-gray-400">
          <Logo className="h-5 w-[18px]" />
          <button type="button" className="flex-1 pr-1 text-center">開始</button>
          <button type="button" aria-label="開始を閉じる" className="mr-[10px]"><CloseGlyph /></button>
        </div>
        <div className="flex h-9 w-[153px] items-center rounded-b-sm border border-[#1e1e1e] border-t-0 bg-linear-to-b from-[#3a3a3a] to-[#474747] pl-[6px] text-gray-100">
          <DocIcon className="h-[18px] w-[15px]" />
          <button type="button" className="flex-1 text-center">片持ち梁 : 1</button>
          <button type="button" aria-label="片持ち梁を閉じる" className="mr-[10px]"><CloseGlyph /></button>
        </div>
      </div>
    </main>
  )
}

/* ---------- Status bar ---------- */

function WhiteArrow({ className }: { className?: string }) {
  return (
    <svg viewBox="0 0 10 6" aria-hidden="true" className={`h-[6px] w-[10px] shrink-0 ${className ?? ''}`}>
      <path d="M0 0H10L5 6z" fill="#fff" />
    </svg>
  )
}

function StatusBar() {
  return (
    <footer className={`flex h-[39px] shrink-0 items-center bg-[#333333] pt-[2px] pr-[2px] text-[13px] text-gray-100 ${GOTHIC_FONT}`}>
      <p className="flex-1 pl-[2px]">Preselected: Unnamed.Body.Pad.Edge1 (290.76 mm, -20.00 mm, -10.00 mm)</p>
      <div className="flex items-center gap-[7px]">
        <button type="button" aria-label="通知領域" className="flex h-[33px] w-[113px] items-center justify-between rounded-[3px] border-2 border-[#0c0c0c] bg-linear-to-b from-[#2f2f2f] to-[#232323] pr-[3px] pl-px">
          <svg viewBox="0 0 17 17" aria-hidden="true" className="size-[17px]">
            <rect x="0.500" y="0.500" width="16" height="16" fill="#38689f" stroke="#6d9bd0" />
            <path d="M1 1L8 8L16 1z" fill="#4f81bd" />
          </svg>
          <WhiteArrow className="mt-1" />
        </button>
        <div className="relative h-[33px] w-[113px]">
          <select aria-label="ナビゲーションスタイル" className="h-full w-full appearance-none rounded-[3px] border-2 border-[#0c0c0c] bg-linear-to-b from-[#2f2f2f] to-[#232323] pl-[35px]">
            <option>Blender</option>
          </select>
          <svg viewBox="0 0 12 18" aria-hidden="true" className="pointer-events-none absolute top-2 left-[19px] h-[18px] w-3" fill="none" stroke="#26303a" strokeWidth="2">
            <rect x="1" y="1" width="10" height="16" rx="5" />
            <circle cx="6" cy="6" r="2" />
          </svg>
          <WhiteArrow className="pointer-events-none absolute right-1 bottom-3" />
        </div>
        <button type="button" className="flex h-7 w-[178px] items-center justify-between rounded-[3px] border-2 border-[#0c0c0c] bg-linear-to-b from-[#2f2f2f] to-[#232323] pr-[3px] pl-[3px] whitespace-pre">
          677.48 mm x 332.01  mm
          <WhiteArrow />
        </button>
      </div>
    </footer>
  )
}

export default function App() {
  return (
    <div className="flex h-screen flex-col overflow-hidden bg-[#333333]">
      {/* Title bar */}
      <header className={`flex h-[29px] shrink-0 items-center bg-[#202020] pl-1 text-white ${UI_FONT}`}>
        <Logo className="h-5 w-4" />
        <h1 className="ml-2 flex-1 text-[14px]">片持ち梁 - FreeCAD 1.0.0</h1>
        <div className="flex pr-1">
          <button type="button" aria-label="最小化" className="flex h-7 w-[58px] items-center justify-center">
            <span className="h-px w-3 bg-white" />
          </button>
          <button type="button" aria-label="元に戻す" className="flex h-7 w-[58px] items-center justify-center">
            <svg viewBox="0 0 12 12" aria-hidden="true" className="size-3" fill="none" stroke="#fff">
              <rect x="0.500" y="2.500" width="9" height="9" rx="1" />
              <path d="M2.500 0.500H9.500Q11.500 0.500 11.500 2.500V9.500" />
            </svg>
          </button>
          <button type="button" aria-label="閉じる" className="flex h-7 w-[58px] items-center justify-center">
            <svg viewBox="0 0 12 12" aria-hidden="true" className="size-3" stroke="#fff">
              <path d="M0 0L12 12M12 0L0 12" />
            </svg>
          </button>
        </div>
      </header>

      {/* Menu bar */}
      <nav className={`flex h-7 shrink-0 items-center bg-[#252525] pl-[10px] text-white ${UI_FONT}`}>
        {MENUS.map((m) => (
          <button key={m.label} type="button" className={`shrink-0 text-left whitespace-nowrap ${m.width}`}>
            {m.label}
          </button>
        ))}
      </nav>

      <Toolbars />

      <div className="flex min-h-0 flex-1">
        <ModelDock />
        <Workspace />
      </div>

      <StatusBar />
    </div>
  )
}
